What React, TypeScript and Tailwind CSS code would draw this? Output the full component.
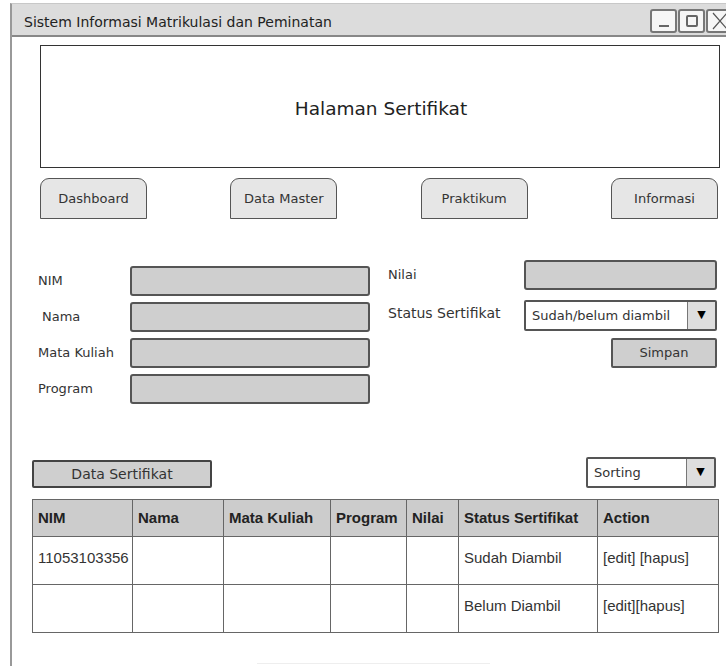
import React from "react";

const navItems = ["Dashboard", "Data Master", "Praktikum", "Informasi"];
const leftFields = ["NIM", "Nama", "Mata Kuliah", "Program"];

const columns = [
  { label: "NIM", w: "w-[100px]" },
  { label: "Nama", w: "w-[91px]" },
  { label: "Mata Kuliah", w: "w-[107px]" },
  { label: "Program", w: "w-[76px]" },
  { label: "Nilai", w: "w-[52px]" },
  { label: "Status Sertifikat", w: "w-[139px]" },
  { label: "Action", w: "w-[121px]" }
];

const rows = [
  ["11053103356", "", "", "", "", "Sudah Diambil", "[edit] [hapus]"],
  ["", "", "", "", "", "Belum Diambil", "[edit][hapus]"]
];

const WindowButton = ({ children }: { children: React.ReactNode }) => (
  <div className="flex h-[24px] w-[27px] items-center justify-center rounded-[3px] border-2 border-[#777] bg-[#f6f6f6]">
    {children}
  </div>
);

const SelectBox = ({ text, className }: { text: string; className: string }) => (
  <div className={`flex rounded-[2px] border-2 border-[#555] bg-white ${className}`}>
    <div className="flex flex-1 items-center pl-[6px] text-[13px] text-[#333]">{text}</div>
    <div className="flex w-[28px] items-center justify-center border-l border-[#777] bg-[#dedede] text-[11px] text-black">
      ▼
    </div>
  </div>
);

const App = () => {
  return (
    <div className="h-[666px] w-[726px] overflow-hidden bg-white font-['DejaVu_Sans',sans-serif] text-[#333]">
      <div className="ml-[10px] mt-[3px] h-[700px] w-[740px] border-l-2 border-t border-l-[#999] border-t-[#c8c8c8]">
        {/* title bar */}
        <div className="flex h-[33px] items-start border-b-2 border-[#888] bg-[#dcdcdc]">
          <span className="mt-[11px] pl-[12px] text-[14px] leading-none text-[#222]">
            Sistem Informasi Matrikulasi dan Peminatan
          </span>
          <div className="ml-auto mr-[17px] mt-[5px] flex gap-px">
            <WindowButton>
              <div className="mt-[10px] h-[2px] w-[10px] bg-[#666]" />
            </WindowButton>
            <WindowButton>
              <div className="h-[12px] w-[12px] rounded-[2px] border-2 border-[#666]" />
            </WindowButton>
            <WindowButton>
              <svg width="18" height="18" viewBox="0 0 18 18">
                <path d="M2 1 L16 17 M16 1 L2 17" stroke="#555" strokeWidth="1.2" fill="none" />
              </svg>
            </WindowButton>
          </div>
        </div>

        {/* header */}
        <div className="ml-[28px] mt-[8px] flex h-[123px] w-[680px] items-center justify-center border border-[#333] pl-[2px] pt-[4px] text-[18.5px] text-[#222]">
          Halaman Sertifikat
        </div>

        {/* navigation */}
        <div className="ml-[28px] mt-[10px] flex w-[678px] justify-between">
          {navItems.map((item) => (
            <div
              key={item}
              className="flex h-[41px] w-[107px] items-center justify-center rounded-t-[9px] border-[1.5px] border-[#555] bg-[#e6e6e6] text-[13px]"
            >
              {item}
            </div>
          ))}
        </div>

        {/* form */}
        <div className="mt-[41px] flex items-start">
          <div className="ml-[26px] flex flex-col gap-[6px] pt-[6px]">
            {leftFields.map((field) => (
              <div key={field} className="flex h-[30px] items-center">
                <span className={`w-[92px] text-[13px] ${field === "Nama" ? "pl-[4px]" : ""}`}>{field}</span>
                <div className="h-[30px] w-[240px] rounded-[3px] border-2 border-[#555] bg-[#cfcfcf]" />
              </div>
            ))}
          </div>

          <div className="ml-[18px] flex flex-col">
            <div className="flex h-[30px] items-center">
              <span className="w-[136px] text-[13px]">Nilai</span>
              <div className="h-[30px] w-[193px] rounded-[3px] border-2 border-[#555] bg-[#cfcfcf]" />
            </div>
            <div className="mt-[10px] flex h-[31px] items-center">
              <span className="w-[136px] self-start pt-[3px] text-[14px]">Status Sertifikat</span>
              <SelectBox text="Sudah/belum diambil" className="h-[31px] w-[193px]" />
            </div>
            <div className="mt-[7px] flex justify-end">
              <div className="flex h-[30px] w-[106px] items-center justify-center rounded-[2px] border-2 border-[#555] bg-[#cfcfcf] text-[13px]">
                Simpan
              </div>
            </div>
          </div>
        </div>

        {/* table toolbar */}
        <div className="ml-[20px] mt-[53px] flex w-[684px] items-end justify-between">
          <div className="flex h-[28px] w-[180px] items-center justify-center rounded-[2px] border-2 border-[#444] bg-[#cfcfcf] text-[14px]">
            Data Sertifikat
          </div>
          <SelectBox text="Sorting" className="h-[31px] w-[130px]" />
        </div>

        {/* table */}
        <table className="ml-[20px] mt-[11px] w-[686px] table-fixed border-collapse font-['Liberation_Sans',Arial,sans-serif] text-[15px] text-[#333]">
          <thead>
            <tr className="h-[37px] bg-[#cccccc]">
              {columns.map((col) => (
                <th
                  key={col.label}
                  className={`${col.w} border border-[#666] px-[5px] text-left font-bold text-[#222]`}
                >
                  {col.label}
                </th>
              ))}
            </tr>
          </thead>
          <tbody>
            {rows.map((row, i) => (
              <tr key={i} className="h-[48px]">
                {row.map((cell, j) => (
                  <td key={j} className="whitespace-nowrap border border-[#666] px-[5px] pb-[4px]">
                    {cell}
                  </td>
                ))}
              </tr>
            ))}
          </tbody>
        </table>

        <div className="ml-[245px] mt-[30px] h-px w-[233px] bg-[#eeeeee]" />
      </div>
    </div>
  );
};

export default App;
